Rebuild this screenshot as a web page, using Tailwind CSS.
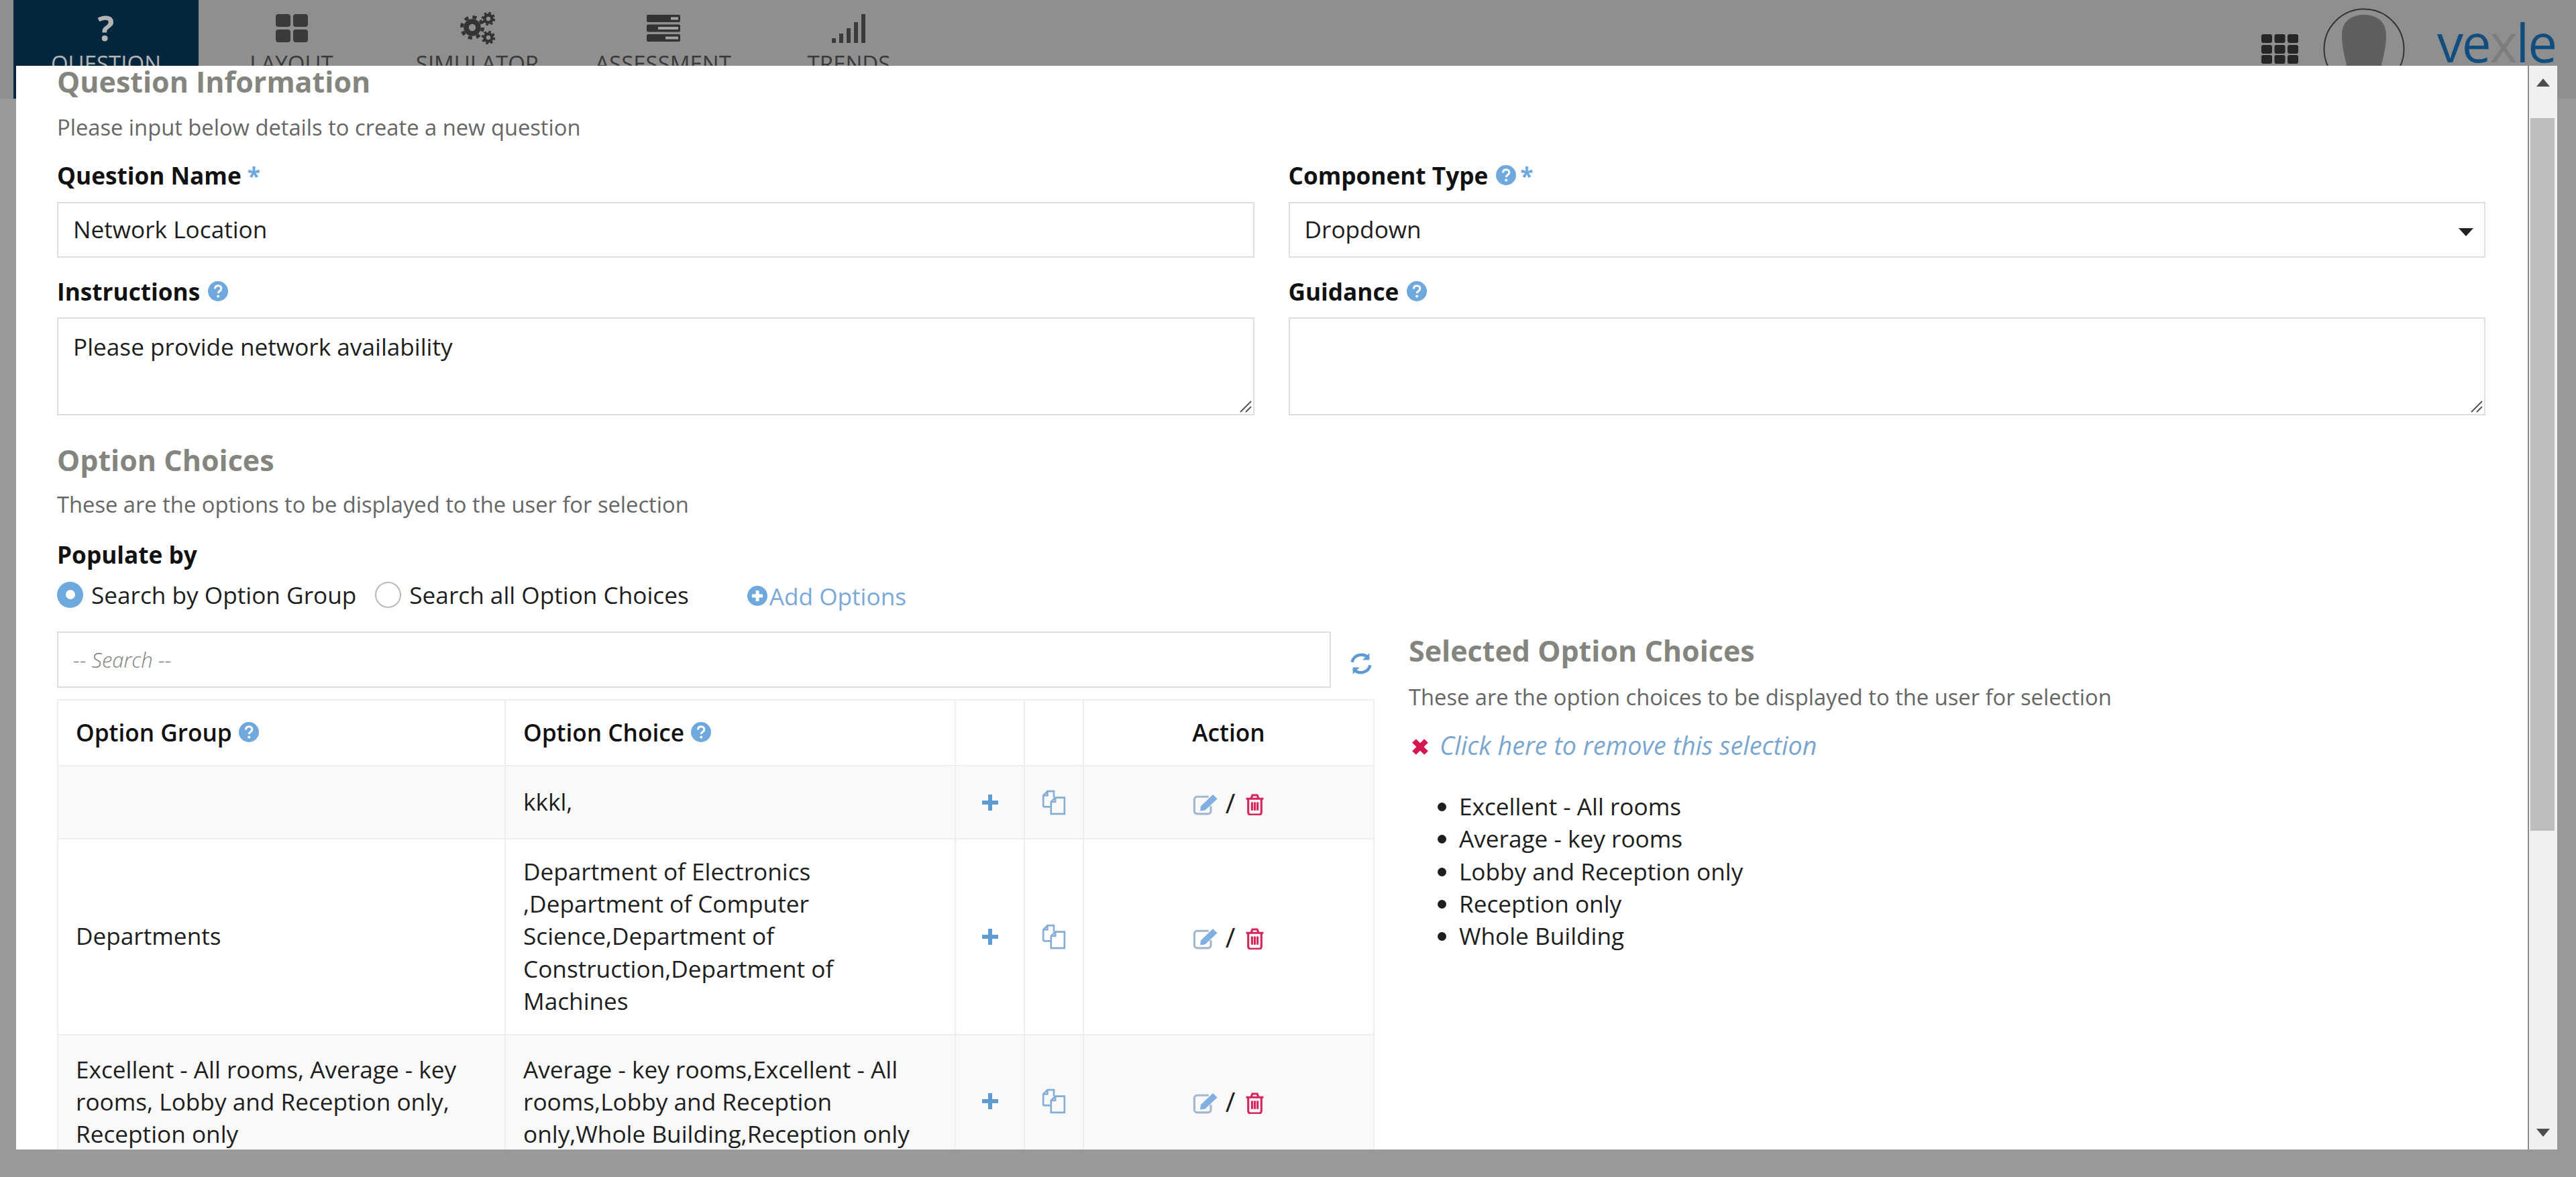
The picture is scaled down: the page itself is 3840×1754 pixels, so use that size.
<!doctype html>
<html lang="en">
<head>
<meta charset="utf-8">
<title>Question</title>
<script src="https://cdn.jsdelivr.net/npm/@tailwindcss/browser@4"></script>
</head>
<body class="m-0">
<div class="relative w-[3840px] h-[1754px] overflow-hidden bg-[#999999] font-['Open_Sans',sans-serif] text-[35.2px] text-[#1e1e1e]">

  <!-- header -->
  <header class="h-[147px] bg-[#8f8f8f] flex pl-[20px] text-[#3a3a3a]">
    <div class="w-[276px] h-[147px] bg-[#03263f] flex flex-col items-center text-[#b4b4b4]">
      <div class="h-[66px] flex items-center justify-center pt-[16px] text-[52px] font-bold leading-none">?</div>
      <div class="text-[33px] leading-[40px] mt-[9px]">QUESTION</div>
    </div>
    <div class="w-[277px] flex flex-col items-center">
      <div class="h-[66px] flex items-center justify-center pt-[18px]">
        <svg class="w-[48px] h-[42px]" viewBox="0 0 48 42" fill="#3a3a3a"><rect x="0" y="0" width="22" height="19" rx="4"/><rect x="26" y="0" width="22" height="19" rx="4"/><rect x="0" y="23" width="22" height="19" rx="4"/><rect x="26" y="23" width="22" height="19" rx="4"/></svg>
      </div>
      <div class="text-[33px] leading-[40px] mt-[9px]">LAYOUT</div>
    </div>
    <div class="w-[277px] flex flex-col items-center">
      <div class="h-[66px] flex items-center justify-center pt-[18px]">
        <svg class="w-[52px] h-[48px]" viewBox="0 0 52 48" fill="none" stroke="#333333"><circle cx="18" cy="23" r="9" stroke-width="7.500"/><circle cx="18" cy="23" r="15.500" stroke-width="5" stroke-dasharray="6 6.170"/><circle cx="42" cy="10" r="5.500" stroke-width="4.500"/><circle cx="42" cy="10" r="8.500" stroke-width="3.500" stroke-dasharray="3.500 3.180"/><circle cx="42" cy="38" r="5.500" stroke-width="4.500"/><circle cx="42" cy="38" r="8.500" stroke-width="3.500" stroke-dasharray="3.500 3.180"/></svg>
      </div>
      <div class="text-[33px] leading-[40px] mt-[9px]">SIMULATOR</div>
    </div>
    <div class="w-[277px] flex flex-col items-center">
      <div class="h-[66px] flex items-center justify-center pt-[18px]">
        <svg class="w-[50px] h-[40px]" viewBox="0 0 50 40"><g fill="#333333"><rect width="50" height="11" rx="2"/><rect y="14.500" width="50" height="11" rx="2"/><rect y="29" width="50" height="11" rx="2"/></g><g fill="#a3a3a3"><rect x="36" y="3.500" width="11" height="4"/><rect x="17" y="18" width="30" height="4"/><rect x="28" y="32.500" width="19" height="4"/></g></svg>
      </div>
      <div class="text-[33px] leading-[40px] mt-[9px]">ASSESSMENT</div>
    </div>
    <div class="w-[277px] flex flex-col items-center">
      <div class="h-[66px] flex items-center justify-center pt-[18px]">
        <svg class="w-[51px] h-[43px]" viewBox="0 0 51 43" fill="#3a3a3a"><rect x="0" y="36" width="6" height="7"/><rect x="11" y="29" width="6" height="14"/><rect x="22" y="21" width="6" height="22"/><rect x="33" y="12" width="6" height="31"/><rect x="44" y="0" width="6" height="43"/></svg>
      </div>
      <div class="text-[33px] leading-[40px] mt-[9px]">TRENDS</div>
    </div>
    <div class="ml-auto flex items-start pr-[30px]">
      <svg class="w-[55px] h-[44px] mt-[51px]" viewBox="0 0 55 44" fill="#262626"><rect x="0" y="0" width="16" height="13" rx="3"/><rect x="19.500" y="0" width="16" height="13" rx="3"/><rect x="39" y="0" width="16" height="13" rx="3"/><rect x="0" y="16" width="16" height="13" rx="3"/><rect x="19.500" y="16" width="16" height="13" rx="3"/><rect x="39" y="16" width="16" height="13" rx="3"/><rect x="0" y="31" width="16" height="13" rx="3"/><rect x="19.500" y="31" width="16" height="13" rx="3"/><rect x="39" y="31" width="16" height="13" rx="3"/></svg>
      <svg class="w-[122px] h-[122px] mt-[12px] ml-[37px]" viewBox="0 0 122 122" fill="none"><circle cx="61" cy="61" r="59.500" stroke="#333333" stroke-width="2"/><path d="M28 40C28 20 42 10 61 10s33 10 33 30c0 22-6 38-8 50l4 22H32l4-22c-2-12-8-28-8-50z" fill="#5f5f5f"/></svg>
      <div class="ml-[48px] mt-[13px] text-[78px] leading-[100px] text-[#124d80] tracking-[-2px]">ve<span class="text-[#7d7d7d]">x</span>le</div>
    </div>
  </header>

  <!-- modal -->
  <div class="absolute left-[24px] top-[98px] w-[3788px] h-[1615px] bg-white flex overflow-hidden">
    <div class="flex-1 min-w-0 overflow-hidden pl-[61px] pr-[63px]">
      <h2 class="m-0 text-[43px] leading-[48px] font-bold text-[#85857f]">Question Information</h2>
      <p class="mt-[20px] leading-[48px] text-[#666666] text-[32.7px]">Please input below details to create a new question</p>

      <div class="grid grid-cols-2 gap-x-[51px]">
        <div class="mt-[23px]">
          <label class="block leading-[48px] font-bold text-[#111111]">Question Name <span class="text-[#6fa8dc]">*</span></label>
          <div class="mt-[16px] h-[83px] border-2 border-[#dedede] pl-[22px] pb-[3px] flex items-center">Network Location</div>
        </div>
        <div class="mt-[23px]">
          <label class="flex items-center gap-[12px] leading-[48px] font-bold text-[#111111]">Component Type
            <svg class="w-[30px] h-[30px]" viewBox="0 0 30 30"><circle cx="15" cy="15" r="15" fill="#6fa8dc"/><path d="M10.500 11.500c0-3 2-4.700 4.700-4.700s4.600 1.700 4.600 4.200c0 3.800-4.600 3.500-4.600 7" fill="none" stroke="#fff" stroke-width="3"/><circle cx="15.200" cy="22.500" r="2" fill="#fff"/></svg>
            <span class="text-[#6fa8dc] -ml-[6px]">*</span></label>
          <div class="relative mt-[16px] h-[83px] border-2 border-[#dedede] pl-[22px] pb-[3px] flex items-center">Dropdown
            <svg class="absolute right-[16px] top-[37px] w-[22px] h-[12px]" viewBox="0 0 22 12"><path d="M0 0h22L11 12z" fill="#222222"/></svg>
          </div>
        </div>
        <div class="mt-[26px]">
          <label class="flex items-center gap-[12px] leading-[48px] font-bold text-[#111111]">Instructions
            <svg class="w-[30px] h-[30px]" viewBox="0 0 30 30"><circle cx="15" cy="15" r="15" fill="#6fa8dc"/><path d="M10.500 11.500c0-3 2-4.700 4.700-4.700s4.600 1.700 4.600 4.200c0 3.800-4.600 3.500-4.600 7" fill="none" stroke="#fff" stroke-width="3"/><circle cx="15.200" cy="22.500" r="2" fill="#fff"/></svg></label>
          <div class="relative mt-[15px] h-[146px] border-2 border-[#dedede] pl-[22px] pt-[17px] leading-[48px]">Please provide network availability
            <svg class="absolute right-[2px] bottom-[2px] w-[20px] h-[20px]" viewBox="0 0 20 20" stroke="#555555" stroke-width="2"><path d="M3 19L19 3M11 19l8-8"/></svg>
          </div>
        </div>
        <div class="mt-[26px]">
          <label class="flex items-center gap-[12px] leading-[48px] font-bold text-[#111111]">Guidance
            <svg class="w-[30px] h-[30px]" viewBox="0 0 30 30"><circle cx="15" cy="15" r="15" fill="#6fa8dc"/><path d="M10.500 11.500c0-3 2-4.700 4.700-4.700s4.600 1.700 4.600 4.200c0 3.800-4.600 3.500-4.600 7" fill="none" stroke="#fff" stroke-width="3"/><circle cx="15.200" cy="22.500" r="2" fill="#fff"/></svg></label>
          <div class="relative mt-[15px] h-[146px] border-2 border-[#dedede]">
            <svg class="absolute right-[2px] bottom-[2px] w-[20px] h-[20px]" viewBox="0 0 20 20" stroke="#555555" stroke-width="2"><path d="M3 19L19 3M11 19l8-8"/></svg>
          </div>
        </div>
      </div>

      <h3 class="m-0 mt-[38px] text-[43px] leading-[58px] font-bold text-[#85857f]">Option Choices</h3>
      <p class="mt-[13px] leading-[48px] text-[#666666] text-[32.7px]">These are the options to be displayed to the user for selection</p>
      <div class="mt-[26px] leading-[48px] font-bold text-[#111111]">Populate by</div>

      <div class="mt-[12px] h-[48px] flex items-center">
        <span class="w-[39px] h-[39px] rounded-full bg-[#6fa8dc] flex items-center justify-center"><span class="w-[14px] h-[14px] rounded-full bg-white"></span></span>
        <span class="ml-[12px]">Search by Option Group</span>
        <span class="ml-[28px] w-[39px] h-[39px] rounded-full border-2 border-[#b9b9b9]"></span>
        <span class="ml-[12px]">Search all Option Choices</span>
        <span class="ml-[87px] flex items-center text-[#7aa9d8] pt-[4px]">
          <svg class="w-[30px] h-[30px] mr-[3px]" viewBox="0 0 30 30"><circle cx="15" cy="15" r="15" fill="#6fa8dc"/><path d="M15 7v16M7 15h16" stroke="#fff" stroke-width="5"/></svg>Add Options</span>
      </div>

      <div class="mt-[31px] flex gap-[53px]">
        <!-- left -->
        <div class="w-[1962px] shrink-0">
          <div class="flex items-center">
            <div class="w-[1901px] h-[84px] border-2 border-[#dedede] pl-[22px] flex items-center italic font-light text-[#808080] text-[31px]">-- Search --</div>
            <svg class="ml-[27px] w-[36px] h-[36px] mt-[12px]" viewBox="0 0 32 32" fill="none" stroke="#5f9bd0" stroke-width="4"><path d="M4 14A12.500 12.500 0 0 1 26 9"/><path d="M28 18A12.500 12.500 0 0 1 6 23"/><path d="M27 2v9h-9z" fill="#5f9bd0" stroke="none"/><path d="M5 30v-9h9z" fill="#5f9bd0" stroke="none"/></svg>
          </div>
          <table class="mt-[17px] w-[1962px] table-fixed border-collapse">
            <colgroup><col class="w-[667px]"><col class="w-[671px]"><col class="w-[103px]"><col class="w-[88px]"><col class="w-[433px]"></colgroup>
            <thead>
              <tr class="h-[98px]">
                <th class="border-2 border-[#eeeeee] px-[26px] pb-[2px] text-left font-semibold text-[#111111]"><span class="flex items-center gap-[10px]">Option Group <svg class="w-[30px] h-[30px]" viewBox="0 0 30 30"><circle cx="15" cy="15" r="15" fill="#6fa8dc"/><path d="M10.500 11.500c0-3 2-4.700 4.700-4.700s4.600 1.700 4.600 4.200c0 3.800-4.600 3.500-4.600 7" fill="none" stroke="#fff" stroke-width="3"/><circle cx="15.200" cy="22.500" r="2" fill="#fff"/></svg></span></th>
                <th class="border-2 border-[#eeeeee] px-[26px] pb-[2px] text-left font-semibold text-[#111111]"><span class="flex items-center gap-[10px]">Option Choice <svg class="w-[30px] h-[30px]" viewBox="0 0 30 30"><circle cx="15" cy="15" r="15" fill="#6fa8dc"/><path d="M10.500 11.500c0-3 2-4.700 4.700-4.700s4.600 1.700 4.600 4.200c0 3.800-4.600 3.500-4.600 7" fill="none" stroke="#fff" stroke-width="3"/><circle cx="15.200" cy="22.500" r="2" fill="#fff"/></svg></span></th>
                <th class="border-2 border-[#eeeeee]"></th>
                <th class="border-2 border-[#eeeeee]"></th>
                <th class="border-2 border-[#eeeeee] pb-[2px] text-center font-semibold text-[#111111]">Action</th>
              </tr>
            </thead>
            <tbody class="leading-[48.3px]">
              <tr class="h-[109px] bg-[#f9f9f9]">
                <td class="border-2 border-[#eeeeee] px-[26px]"></td>
                <td class="border-2 border-[#eeeeee] px-[26px] pb-[3px]">kkkl,</td>
                <td class="border-2 border-[#eeeeee]"><svg class="mx-auto w-[28px] h-[28px]" viewBox="0 0 28 28"><path d="M14 2v24M2 14h24" stroke="#5f9bd0" stroke-width="6"/></svg></td>
                <td class="border-2 border-[#eeeeee]"><svg class="mx-auto w-[38px] h-[38px]" viewBox="0 0 36 36" fill="none" stroke="#86aed4" stroke-width="2.500"><path d="M3 24V8l6-6h9v9"/><path d="M3 24h11"/><path d="M9 2v6H3"/><path d="M14 34V17l6-6h13v23z"/><path d="M20 11v6h-6"/></svg></td>
                <td class="border-2 border-[#eeeeee]"><div class="flex items-center justify-center pt-[6px]"><svg class="w-[39px] h-[32px]" viewBox="0 0 36 30" fill="none"><path d="M22 4H6a4 4 0 0 0-4 4v16a4 4 0 0 0 4 4h15a4 4 0 0 0 4-4v-7" stroke="#a3b8cc" stroke-width="3"/><path d="M11 17L28 1l6 6-17 16-7 1z" fill="#7fb0e0"/></svg><span class="ml-[10px] leading-none text-[40px] -translate-y-[2px]">/</span><svg class="ml-[15px] w-[29px] h-[32px]" viewBox="0 0 27 31" fill="none" stroke="#d5255a" stroke-width="3"><path d="M1 7h25M8 7l2-5h7l2 5"/><path d="M4 7v20a3 3 0 0 0 3 3h13a3 3 0 0 0 3-3V7"/><path d="M9.500 12v12M13.500 12v12M17.500 12v12"/></svg></div></td>
              </tr>
              <tr class="h-[292px]">
                <td class="border-2 border-[#eeeeee] px-[26px] pb-[3px]">Departments</td>
                <td class="border-2 border-[#eeeeee] px-[26px] pb-[3px]">Department of Electronics ,Department of Computer Science,Department of Construction,Department of Machines</td>
                <td class="border-2 border-[#eeeeee]"><svg class="mx-auto w-[28px] h-[28px]" viewBox="0 0 28 28"><path d="M14 2v24M2 14h24" stroke="#5f9bd0" stroke-width="6"/></svg></td>
                <td class="border-2 border-[#eeeeee]"><svg class="mx-auto w-[38px] h-[38px]" viewBox="0 0 36 36" fill="none" stroke="#86aed4" stroke-width="2.500"><path d="M3 24V8l6-6h9v9"/><path d="M3 24h11"/><path d="M9 2v6H3"/><path d="M14 34V17l6-6h13v23z"/><path d="M20 11v6h-6"/></svg></td>
                <td class="border-2 border-[#eeeeee]"><div class="flex items-center justify-center pt-[6px]"><svg class="w-[39px] h-[32px]" viewBox="0 0 36 30" fill="none"><path d="M22 4H6a4 4 0 0 0-4 4v16a4 4 0 0 0 4 4h15a4 4 0 0 0 4-4v-7" stroke="#a3b8cc" stroke-width="3"/><path d="M11 17L28 1l6 6-17 16-7 1z" fill="#7fb0e0"/></svg><span class="ml-[10px] leading-none text-[40px] -translate-y-[2px]">/</span><svg class="ml-[15px] w-[29px] h-[32px]" viewBox="0 0 27 31" fill="none" stroke="#d5255a" stroke-width="3"><path d="M1 7h25M8 7l2-5h7l2 5"/><path d="M4 7v20a3 3 0 0 0 3 3h13a3 3 0 0 0 3-3V7"/><path d="M9.500 12v12M13.500 12v12M17.500 12v12"/></svg></div></td>
              </tr>
              <tr class="h-[198px] bg-[#f9f9f9]">
                <td class="border-2 border-[#eeeeee] px-[26px]">Excellent - All rooms, Average - key rooms, Lobby and Reception only, Reception only</td>
                <td class="border-2 border-[#eeeeee] px-[26px]">Average - key rooms,Excellent - All rooms,Lobby and Reception only,Whole Building,Reception only</td>
                <td class="border-2 border-[#eeeeee]"><svg class="mx-auto w-[28px] h-[28px]" viewBox="0 0 28 28"><path d="M14 2v24M2 14h24" stroke="#5f9bd0" stroke-width="6"/></svg></td>
                <td class="border-2 border-[#eeeeee]"><svg class="mx-auto w-[38px] h-[38px]" viewBox="0 0 36 36" fill="none" stroke="#86aed4" stroke-width="2.500"><path d="M3 24V8l6-6h9v9"/><path d="M3 24h11"/><path d="M9 2v6H3"/><path d="M14 34V17l6-6h13v23z"/><path d="M20 11v6h-6"/></svg></td>
                <td class="border-2 border-[#eeeeee]"><div class="flex items-center justify-center pt-[6px]"><svg class="w-[39px] h-[32px]" viewBox="0 0 36 30" fill="none"><path d="M22 4H6a4 4 0 0 0-4 4v16a4 4 0 0 0 4 4h15a4 4 0 0 0 4-4v-7" stroke="#a3b8cc" stroke-width="3"/><path d="M11 17L28 1l6 6-17 16-7 1z" fill="#7fb0e0"/></svg><span class="ml-[10px] leading-none text-[40px] -translate-y-[2px]">/</span><svg class="ml-[15px] w-[29px] h-[32px]" viewBox="0 0 27 31" fill="none" stroke="#d5255a" stroke-width="3"><path d="M1 7h25M8 7l2-5h7l2 5"/><path d="M4 7v20a3 3 0 0 0 3 3h13a3 3 0 0 0 3-3V7"/><path d="M9.500 12v12M13.500 12v12M17.500 12v12"/></svg></div></td>
              </tr>
            </tbody>
          </table>
        </div>
        <!-- right -->
        <div class="flex-1 min-w-0">
          <h3 class="m-0 text-[43px] leading-[58px] font-bold text-[#85857f]">Selected Option Choices</h3>
          <p class="mt-[16px] leading-[48px] text-[#666666] text-[32.7px]">These are the option choices to be displayed to the user for selection</p>
          <div class="mt-[26px] flex items-center h-[48px]">
            <svg class="ml-[4px] w-[26px] h-[26px]" viewBox="0 0 26 26"><path d="M4 4l18 18M22 4L4 22" stroke="#d5174f" stroke-width="8"/></svg>
            <span class="ml-[16px] -mt-[4px] italic text-[#7ba6cf] text-[37.7px]">Click here to remove this selection</span>
          </div>
          <ul class="mt-[40px] list-disc pl-[75px] leading-[48.3px]">
            <li>Excellent - All rooms</li>
            <li>Average - key rooms</li>
            <li>Lobby and Reception only</li>
            <li>Reception only</li>
            <li>Whole Building</li>
          </ul>
        </div>
      </div>
    </div>
    <!-- scrollbar -->
    <div class="w-[44px] shrink-0 bg-[#f0f0f0] border-l-2 border-[#8c8c8c] flex flex-col items-center">
      <div class="h-[78px] flex items-center justify-center pb-[28px]"><svg class="w-[20px] h-[12px]" viewBox="0 0 20 12"><path d="M10 0l10 12H0z" fill="#4d4d4d"/></svg></div>
      <div class="w-[36px] h-[1062px] bg-[#bebebe] -ml-[2px]"></div>
      <div class="mt-auto h-[50px] flex items-center justify-center"><svg class="w-[20px] h-[12px]" viewBox="0 0 20 12"><path d="M0 0h20L10 12z" fill="#4d4d4d"/></svg></div>
    </div>
  </div>
</div>
</body>
</html>
